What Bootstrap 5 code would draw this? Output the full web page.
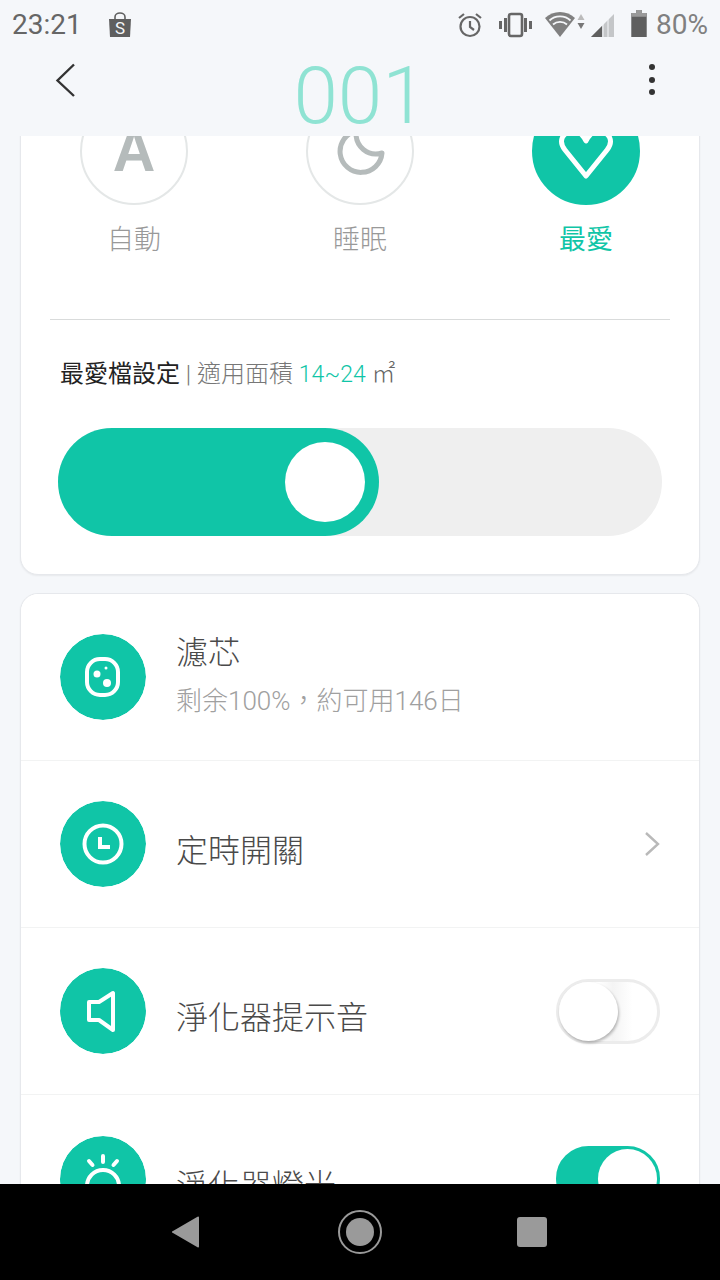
<!DOCTYPE html>
<html lang="zh-Hant">
<head>
  <meta charset="UTF-8">
  <title>001</title>
  <link href="https://cdn.jsdelivr.net/npm/bootstrap@5.3.0/dist/css/bootstrap.min.css" rel="stylesheet">
  <style>
    html, body { height: 100%; }
    body { background: #f5f7fa; font-family: Roboto, "Noto Sans CJK TC", sans-serif; font-weight: 300; overflow: hidden; color: #444; }
    .app-shell { height: 1280px; width: 720px; }

    .status-bar { height: 50px; padding: 0 12px 0 12px; font-size: 28px; font-weight: 400; color: #666; }
    .status-bar svg { display: block; flex: none; }
    .shop-icon { margin-left: 26px; }
    .shop-letter { font-size: 17px; fill: #f5f7fa; }
    .st-vib { margin-left: 16px; }
    .st-wifi { margin-left: 13px; }
    .st-signal { margin-left: 6px; }
    .st-batt { margin-left: 17px; margin-bottom: 3px; }
    .st-pct { margin-left: 9px; color: #808080; }

    .top-nav { height: 86px; padding: 0 50px 0 50px; }
    .nav-glyph { display: block; margin-bottom: 26px; }
    .device-title { font-weight: 300; font-size: 80px; line-height: 86px; color: #8fe3d3; margin-top: 6px; }

    .scroll-area { flex: 1 1 0; min-height: 0; overflow: hidden; padding: 0 20px; }
    .panel { border: 1px solid #e6e8ec; border-radius: 18px; background: #fff; box-shadow: 0 1px 2px rgba(0,0,0,.06); }
    .panel-modes { margin-top: -60px; padding: 20px 29px 38px 29px; }
    .panel-list { margin-top: 18px; }

    .mode-row { margin: 0 -29px; }
    .mode-circle { width: 108px; height: 108px; border-radius: 50%; border: 2px solid #e4e7e7; overflow: hidden; }
    .mode-circle svg { display: block; flex: none; }
    .mode-letter { font-family: "Liberation Sans", sans-serif; font-weight: 700; font-size: 59px; line-height: 1; color: #b5bbbb; margin-top: 1px; }
    .mode-circle.is-active { background: #10c5a7; border-color: #10c5a7; }
    .mode-name { font-size: 27px; line-height: 36px; margin-top: 17px; color: #999; }
    .mode-name.is-active { color: #10c5a7; font-weight: 400; }

    .mode-rule { margin: 61px 0 0 0; border-color: #d9dbdb; opacity: 1; }
    .area-line { font-size: 24px; line-height: 34px; margin: 37px 0 0 10px; color: #777; white-space: nowrap; }
    .area-line b { font-weight: 400; color: #222; }
    .area-range { font-size: 23px; color: #10c5a7; }
    .area-unit { color: #666; }

    .level-track { height: 108px; margin: 36px 8px 0 8px; border-radius: 54px; background: #efefef; }
    .level-fill { height: 108px; border-radius: 54px; background: #10c5a7; padding-right: 14px; }
    .level-knob { width: 80px; height: 80px; border-radius: 50%; background: #fff; }

    .setting-row { height: 167px; padding: 0 39px 0 39px; background: #fff; border-color: #f2f3f3; }
    .setting-row:first-child { border-top-left-radius: 18px; border-top-right-radius: 18px; }
    .setting-icon { width: 86px; height: 86px; border-radius: 50%; flex: none; display: block; }
    .setting-text { margin-left: 30px; }
    .setting-title { font-size: 32px; line-height: 48px; color: #4a4a4a; }
    .setting-title.is-single { padding-top: 14px; }
    .setting-sub { font-size: 26px; line-height: 48px; color: #a0a0a0; white-space: nowrap; }

    .sw-toggle { width: 104px; height: 65px; border-radius: 33px; border: 3px solid #ececec; flex: none; background: linear-gradient(90deg, #fff 40%, #f4f4f4 55%, #fff 75%); }
    .sw-knob { display: block; width: 59px; height: 59px; border-radius: 50%; background: #fff; box-shadow: 1px 2px 3px rgba(0,0,0,.28); }
    .sw-toggle.is-on { border-color: #10c5a7; background: #10c5a7; }
    .sw-toggle.is-on .sw-knob { box-shadow: none; }

    .android-nav { height: 96px; background: #000; flex: none; }
    .android-nav svg { display: block; flex: none; }
  </style>
</head>
<body>

<div class="app-shell d-flex flex-column">

  <!-- status bar -->
  <div class="status-bar d-flex align-items-center flex-none">
    <span>23:21</span>
    <svg class="shop-icon" width="24" height="26" viewBox="0 0 24 26">
      <path d="M1 7h22l-1 18H2z" fill="#5f5f5f"/>
      <path d="M7 8V5a5 4 0 0 1 10 0v3" fill="none" stroke="#5f5f5f" stroke-width="1.6"/>
      <text class="shop-letter" x="12" y="22" text-anchor="middle">S</text>
    </svg>
    <div class="ms-auto d-flex align-items-center">
      <svg width="26" height="26" viewBox="0 0 26 26" fill="none" stroke="#666" stroke-width="2.2">
        <circle cx="13" cy="14.5" r="9.5"/>
        <path d="M13 9v6l4 3M2 6l5-4M24 6l-5-4"/>
      </svg>
      <svg class="st-vib" width="33" height="26" viewBox="0 0 33 26">
        <rect x="10" y="2" width="13" height="22" rx="2" fill="none" stroke="#666" stroke-width="2.6"/>
        <path d="M5 6h3v14H5zM25 6h3v14h-3zM0 9h3v8H0zM30 9h3v8h-3z" fill="#666"/>
      </svg>
      <svg class="st-wifi" width="40" height="28" viewBox="0 0 40 28">
        <path d="M0 7C8-1 22-1 30 7L15 26z" fill="#808080"/>
        <path d="M4.500 9.500C10 4 20 4 25.500 9.500M8 13.500C12 10 18 10 22 13.500" fill="none" stroke="#f5f7fa" stroke-width="1.800"/>
        <path d="M36 3l3.500 6h-7z" fill="#bbb"/>
        <path d="M36 18l3.500-6h-7z" fill="#777"/>
      </svg>
      <svg class="st-signal" width="23" height="26" viewBox="0 0 23 26">
        <path d="M0 25L23 2v23z" fill="#c4c6c8"/>
        <path d="M0 25l11-11v11z" fill="#5f5f5f"/>
        <path d="M12 25V12M17 25V7" stroke="#f5f7fa" stroke-width="1"/>
      </svg>
      <svg class="st-batt" width="16" height="27" viewBox="0 0 16 28">
        <path d="M5 0h6v3h5v25H0V3h5z" fill="#5f5f5f"/>
        <path d="M5 0h6v3h5v4H0V3h5z" fill="#9a9a9a"/>
      </svg>
      <span class="st-pct">80%</span>
    </div>
  </div>

  <!-- title bar -->
  <div class="top-nav d-flex align-items-center justify-content-between flex-none">
    <svg class="nav-glyph" width="30" height="40" viewBox="0 0 30 40" fill="none" stroke="#333" stroke-width="2.400">
      <path d="M24 4.500L7.500 20.500 24 36"/>
    </svg>
    <div class="device-title">001</div>
    <svg class="nav-glyph" width="30" height="40" viewBox="0 0 30 40" fill="#333">
      <circle cx="12" cy="7" r="3"/>
      <circle cx="12" cy="20" r="3"/>
      <circle cx="12" cy="32" r="3"/>
    </svg>
  </div>

  <!-- scrolled content -->
  <div class="scroll-area">

    <div class="card panel panel-modes">
      <div class="row g-0 mode-row text-center">
        <div class="col-4 d-flex flex-column align-items-center">
          <div class="mode-circle d-flex align-items-center justify-content-center">
            <span class="mode-letter">A</span>
          </div>
          <div class="mode-name">自動</div>
        </div>
        <div class="col-4 d-flex flex-column align-items-center">
          <div class="mode-circle d-flex align-items-center justify-content-center">
            <svg width="104" height="104" viewBox="0 0 104 104" fill="none" stroke="#b5bbbb" stroke-width="5" stroke-linecap="round" stroke-linejoin="round">
              <path d="M48 32A21 21 0 1 0 74 54C60 58 47 48 48 32z"/>
            </svg>
          </div>
          <div class="mode-name">睡眠</div>
        </div>
        <div class="col-4 d-flex flex-column align-items-center">
          <div class="mode-circle is-active d-flex align-items-center justify-content-center">
            <svg width="104" height="104" viewBox="0 0 104 104" fill="none" stroke="#fff" stroke-width="5" stroke-linejoin="round">
              <path d="M52 77L31 51C24 42 28 33 40 32C45 32 49 36 52 42C55 36 59 32 64 32C76 33 80 42 73 51z"/>
            </svg>
          </div>
          <div class="mode-name is-active">最愛</div>
        </div>
      </div>

      <hr class="mode-rule">

      <div class="area-line"><b>最愛檔設定</b> | 適用面積 <span class="area-range">14~24</span> <span class="area-unit">㎡</span></div>

      <div class="level-track">
        <div class="level-fill d-flex align-items-center justify-content-end" style="width: 53.2%">
          <div class="level-knob"></div>
        </div>
      </div>
    </div>

    <div class="card panel panel-list">
      <div class="list-group list-group-flush">
        <div class="list-group-item setting-row d-flex align-items-center">
          <svg class="setting-icon" viewBox="0 0 86 86">
            <circle cx="43" cy="43" r="43" fill="#10c5a7"/>
            <rect x="27" y="25" width="31" height="36" rx="13" fill="none" stroke="#fff" stroke-width="4"/>
            <circle cx="37" cy="40" r="3.500" fill="#fff"/>
            <circle cx="47" cy="49" r="4" fill="#fff"/>
            <circle cx="46" cy="34" r="1.500" fill="#fff"/>
          </svg>
          <div class="setting-text">
            <div class="setting-title">濾芯</div>
            <div class="setting-sub">剩余100%，約可用146日</div>
          </div>
        </div>
        <div class="list-group-item setting-row d-flex align-items-center">
          <svg class="setting-icon" viewBox="0 0 86 86">
            <circle cx="43" cy="43" r="43" fill="#10c5a7"/>
            <circle cx="43" cy="43" r="18.500" fill="none" stroke="#fff" stroke-width="4"/>
            <path d="M40 36v10h10" fill="none" stroke="#fff" stroke-width="4"/>
          </svg>
          <div class="setting-text">
            <div class="setting-title is-single">定時開關</div>
          </div>
          <svg class="ms-auto" width="16" height="26" viewBox="0 0 16 26" fill="none" stroke="#b9b9b9" stroke-width="2.400">
            <path d="M2 2l12 11L2 24"/>
          </svg>
        </div>
        <div class="list-group-item setting-row d-flex align-items-center">
          <svg class="setting-icon" viewBox="0 0 86 86">
            <circle cx="43" cy="43" r="43" fill="#10c5a7"/>
            <path d="M53 25v37L39 52H29V34h10z" fill="none" stroke="#fff" stroke-width="4" stroke-linejoin="round"/>
          </svg>
          <div class="setting-text">
            <div class="setting-title is-single">淨化器提示音</div>
          </div>
          <div class="sw-toggle ms-auto"><span class="sw-knob"></span></div>
        </div>
        <div class="list-group-item setting-row d-flex align-items-center">
          <svg class="setting-icon" viewBox="0 0 86 86">
            <circle cx="43" cy="43" r="43" fill="#10c5a7"/>
            <circle cx="43" cy="50" r="16" fill="none" stroke="#fff" stroke-width="4"/>
            <path d="M43 20v6M29 25l3.500 4M57 25l-3.500 4" stroke="#fff" stroke-width="4" stroke-linecap="round"/>
          </svg>
          <div class="setting-text">
            <div class="setting-title is-single">淨化器燈光</div>
          </div>
          <div class="sw-toggle is-on ms-auto d-flex justify-content-end"><span class="sw-knob"></span></div>
        </div>
      </div>
    </div>
  </div>

  <!-- android nav -->
  <div class="android-nav d-flex align-items-center">
    <svg width="720" height="96" viewBox="0 0 720 96">
      <path d="M199 33.500v29a1 1 0 0 1-1.500.8L173 49a1 1 0 0 1 0-2l24.500-14.300a1 1 0 0 1 1.500.8z" fill="#9a9a9a"/>
      <circle cx="360" cy="48" r="21" fill="none" stroke="#9a9a9a" stroke-width="2"/>
      <circle cx="360" cy="48" r="14" fill="#9a9a9a"/>
      <rect x="517" y="33" width="30" height="30" rx="3" fill="#9a9a9a"/>
    </svg>
  </div>
</div>

<script src="https://cdn.jsdelivr.net/npm/bootstrap@5.3.0/dist/js/bootstrap.bundle.min.js"></script>
</body>
</html>
